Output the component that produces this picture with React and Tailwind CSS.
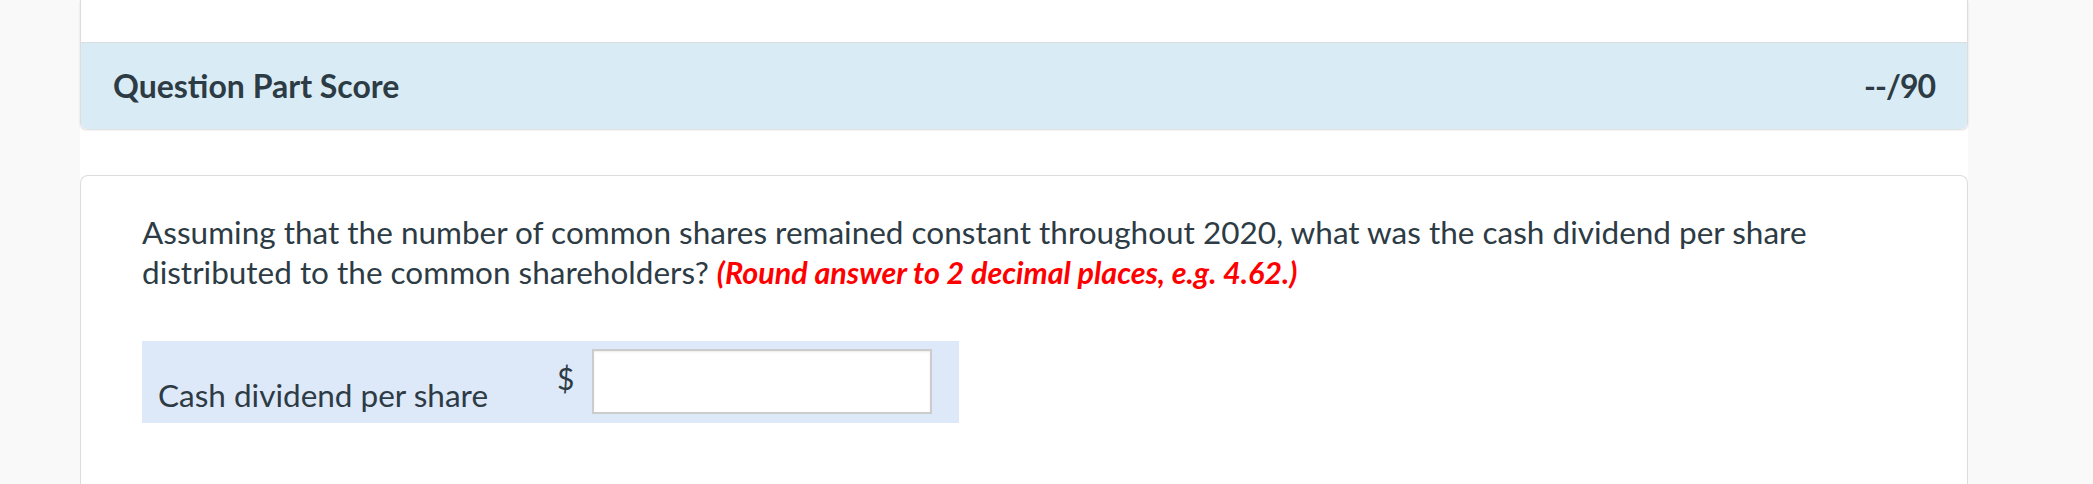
export default function App() {
  return (
    <div className="min-h-[484px] w-full bg-[#f9f9f9] font-['Lato','Liberation_Sans',sans-serif] text-[#2d3b45]">
      <div className="ml-[80px] w-[1888px] min-h-[484px] bg-white">
        {/* score panel */}
        <div className="border-x border-[#dddddd] rounded-b-[6px] shadow-[0_1px_2px_rgba(0,0,0,0.15)]">
          <div className="h-[42px] bg-white" />
          <div className="h-[87px] flex items-center justify-between px-[32px] bg-[#d9ebf5] border-t border-[#dddddd] rounded-b-[6px]">
            <h3 className="text-[32px] font-bold leading-[40px]">Question Part Score</h3>
            <span className="text-[32px] font-bold leading-[40px] tracking-[-1px]">--/90</span>
          </div>
        </div>

        {/* question card */}
        <div className="mt-[46px] min-h-[310px] border border-b-0 border-[#dddddd] rounded-t-[8px] pt-[36px] px-[61px]">
          <p className="text-[31.5px] leading-[40px]">
            Assuming that the number of common shares remained constant throughout 2020, what was the cash dividend per share
            distributed to the common shareholders?{" "}
            <span className="text-[30.5px] font-bold italic text-[#ff0000]">(Round answer to 2 decimal places, e.g. 4.62.)</span>
          </p>

          <div className="mt-[49px] w-[817px] h-[82px] bg-[#dde8f8] flex">
            <div className="w-[415px] self-end pl-[16px] pb-[8px] text-[31.5px] leading-[40px]">Cash dividend per share</div>
            <div className="self-start pt-[17px] text-[30px] leading-[40px]">$</div>
            <input
              type="text"
              className="ml-[18px] mt-[8px] w-[340px] h-[65px] bg-white border-2 border-[#cccccc] shadow-[inset_0_1px_2px_rgba(0,0,0,0.08)] outline-none"
            />
          </div>
        </div>
      </div>
    </div>
  );
}
